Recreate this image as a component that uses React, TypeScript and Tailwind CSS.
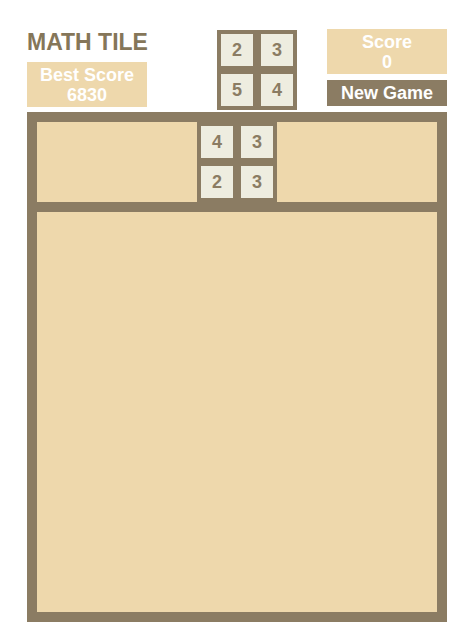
import React from "react";

const BORDER = "bg-[#8b7c63]";

function Tile({ n }: { n: number }) {
  return (
    <div className="w-[32px] h-[32px] bg-[#eeede0] flex items-center justify-center text-[18px] font-bold text-[#8b7c63] leading-none">
      {n}
    </div>
  );
}

function MiniGrid({ nums }: { nums: number[] }) {
  return (
    <div className={`w-[80px] h-[80px] ${BORDER} p-[4px] grid grid-cols-2 gap-[8px]`}>
      {nums.map((n, i) => (
        <Tile key={i} n={n} />
      ))}
    </div>
  );
}

export default function App() {
  return (
    <div
      className="w-[476px] h-[639px] bg-white pt-[29px] pl-[27px]"
      style={{ fontFamily: '"Liberation Sans", Arial, Helvetica, sans-serif' }}
    >
      <div className="flex items-start h-[83px]">
        <div className="w-[120px] flex flex-col">
          <div className="text-[23px] leading-[26px] font-bold text-[#857659] whitespace-nowrap">
            MATH TILE
          </div>
          <div className="mt-[7px] h-[45px] bg-[#eed8ac] flex flex-col items-center justify-center text-white font-bold text-[18px] leading-[20px] pt-[1px]">
            <div>Best Score</div>
            <div>6830</div>
          </div>
        </div>
        <div className="ml-[70px] mt-[1px]">
          <MiniGrid nums={[2, 3, 5, 4]} />
        </div>
        <div className="ml-[30px] w-[120px] flex flex-col">
          <div className="h-[45px] bg-[#eed8ac] flex flex-col items-center justify-center text-white font-bold text-[18px] leading-[20px] pt-[1px]">
            <div>Score</div>
            <div>0</div>
          </div>
          <div className={`mt-[6px] h-[26px] ${BORDER} flex items-center justify-center text-white font-bold text-[18px] leading-none`}>
            New Game
          </div>
        </div>
      </div>
      <div className={`w-[420px] h-[510px] ${BORDER} p-[10px] flex flex-col gap-[10px]`}>
        <div className="flex h-[80px]">
          <div className="w-[160px] bg-[#eed8ac]" />
          <MiniGrid nums={[4, 3, 2, 3]} />
          <div className="w-[160px] bg-[#eed8ac]" />
        </div>
        <div className="flex-1 bg-[#eed8ac]" />
      </div>
    </div>
  );
}
